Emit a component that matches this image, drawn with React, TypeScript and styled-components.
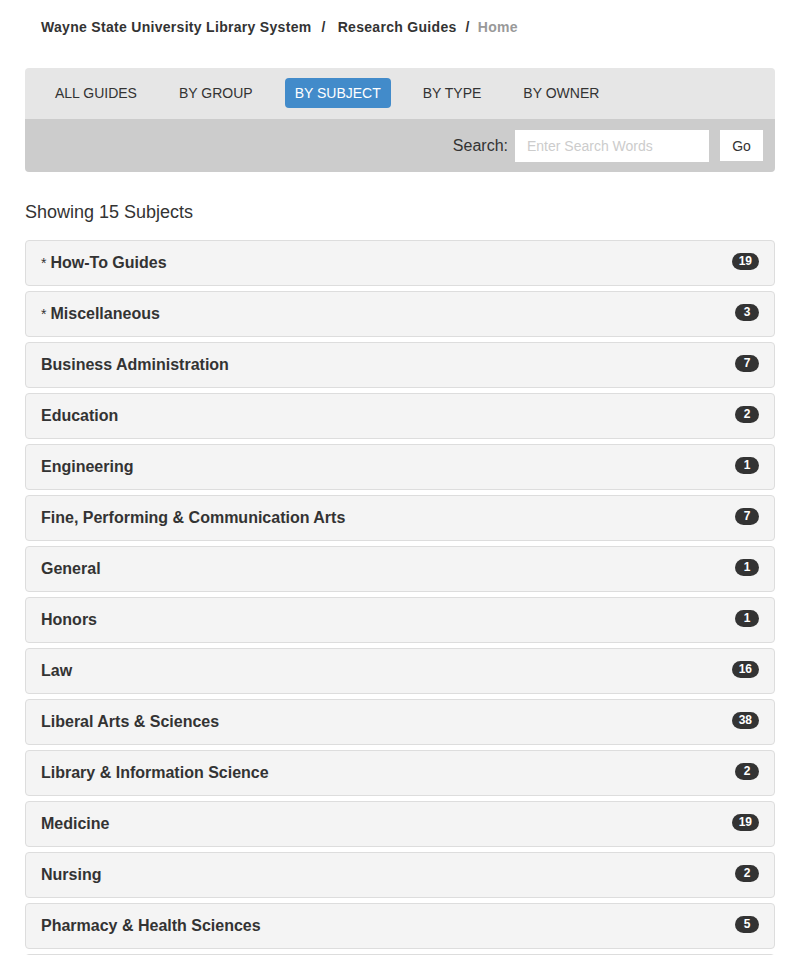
import React from 'react'
import styled, { createGlobalStyle } from 'styled-components'

const GlobalStyle = createGlobalStyle`
  html, body {
    margin: 0;
    padding: 0;
    background: #fff;
    font-family: "Liberation Sans", Arial, sans-serif;
    color: #333;
  }
`

const Page = styled.div`
  padding: 0 25px 0 25px;
  width: 750px;
`

const Breadcrumb = styled.div`
  display: flex;
  align-items: center;
  padding: 18px 0 0 16px;
  height: 18px;
  font-size: 14px;
  font-weight: bold;
  letter-spacing: 0.3px;
  color: #333;
`

const Crumb = styled.span<{ active?: boolean }>`
  color: ${(p) => (p.active ? '#999' : '#333')};
`

const Divider = styled.span<{ wide?: boolean }>`
  padding: ${(p) => (p.wide ? '0 12px 0 10px' : '0 8px 0 9px')};
  color: #333;
`

const NavPanel = styled.div`
  margin-top: 32px;
  border-radius: 4px;
  overflow: hidden;
`

const TabBar = styled.div`
  display: flex;
  align-items: center;
  gap: 22px;
  background: #e6e6e6;
  height: 51px;
  padding: 0 0 0 20px;
`

const Tab = styled.div<{ active?: boolean }>`
  height: 30px;
  line-height: 30px;
  margin-top: -1px;
  padding: 0 10px;
  border-radius: 4px;
  font-size: 14px;
  text-transform: uppercase;
  color: ${(p) => (p.active ? '#fff' : '#333')};
  background: ${(p) => (p.active ? '#428bca' : 'transparent')};
`

const SearchBar = styled.div`
  display: flex;
  align-items: center;
  justify-content: flex-end;
  background: #cccccc;
  height: 53px;
  padding: 0 12px 0 0;
`

const SearchLabel = styled.label`
  font-size: 16px;
  color: #333;
  margin-right: 7px;
`

const SearchInput = styled.input`
  box-sizing: border-box;
  width: 194px;
  height: 32px;
  border: none;
  padding: 0 12px;
  font-family: inherit;
  font-size: 14px;
  color: #555;
  outline: none;
  &::placeholder {
    color: #ccc;
  }
`

const GoButton = styled.button`
  box-sizing: border-box;
  margin-left: 11px;
  width: 43px;
  height: 31px;
  border: none;
  background: #fff;
  font-family: inherit;
  font-size: 14px;
  color: #333;
  padding: 0;
`

const Count = styled.div`
  margin-top: 30px;
  margin-bottom: 17px;
  font-size: 18px;
  color: #333;
`

const List = styled.div`
  display: flex;
  flex-direction: column;
  gap: 5px;
`

const Row = styled.div`
  box-sizing: border-box;
  height: 46px;
  display: flex;
  align-items: center;
  justify-content: space-between;
  padding: 0 15px;
  background: #f4f4f4;
  border: 1px solid #ddd;
  border-radius: 4px;
`

const Title = styled.span`
  font-size: 16px;
  font-weight: bold;
  color: #333;
`

const Star = styled.span`
  font-weight: normal;
  font-size: 14px;
  margin-right: 4px;
`

const Badge = styled.span`
  display: inline-block;
  min-width: 10px;
  padding: 2px 7px;
  margin-top: -4px;
  font-size: 12px;
  font-weight: bold;
  line-height: 13px;
  color: #fff;
  background: #333;
  border-radius: 10px;
  text-align: center;
`

const subjects: [string, number, boolean?][] = [
  ['How-To Guides', 19, true],
  ['Miscellaneous', 3, true],
  ['Business Administration', 7],
  ['Education', 2],
  ['Engineering', 1],
  ['Fine, Performing & Communication Arts', 7],
  ['General', 1],
  ['Honors', 1],
  ['Law', 16],
  ['Liberal Arts & Sciences', 38],
  ['Library & Information Science', 2],
  ['Medicine', 19],
  ['Nursing', 2],
  ['Pharmacy & Health Sciences', 5],
  ['Social Work', 3],
]

const tabs = ['All Guides', 'By Group', 'By Subject', 'By Type', 'By Owner']

export default function App() {
  return (
    <>
      <GlobalStyle />
      <Page>
        <Breadcrumb>
          <Crumb>Wayne State University Library System</Crumb>
          <Divider wide>/</Divider>
          <Crumb>Research Guides</Crumb>
          <Divider>/</Divider>
          <Crumb active>Home</Crumb>
        </Breadcrumb>

        <NavPanel>
          <TabBar>
            {tabs.map((t) => (
              <Tab key={t} active={t === 'By Subject'}>
                {t}
              </Tab>
            ))}
          </TabBar>
          <SearchBar>
            <SearchLabel>Search:</SearchLabel>
            <SearchInput placeholder="Enter Search Words" />
            <GoButton>Go</GoButton>
          </SearchBar>
        </NavPanel>

        <Count>Showing 15 Subjects</Count>

        <List>
          {subjects.map(([name, n, star]) => (
            <Row key={name}>
              <Title>
                {star && <Star>*</Star>}
                {name}
              </Title>
              <Badge>{n}</Badge>
            </Row>
          ))}
        </List>
      </Page>
    </>
  )
}
